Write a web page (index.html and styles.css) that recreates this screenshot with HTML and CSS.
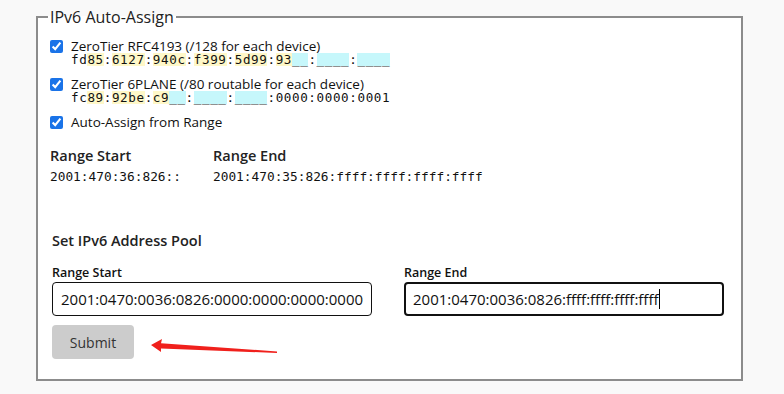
FILE: index.html
```html
<!DOCTYPE html>
<html>
<head>
<meta charset="utf-8">
<link rel="stylesheet" href="styles.css">
</head>
<body>
<fieldset class="box">
  <legend class="box-title">IPv6 Auto-Assign</legend>
  <div class="opt opt-first">
    <input type="checkbox" class="cb" checked>
    <div class="opt-body">
      <div class="opt-label">ZeroTier RFC4193 (/128 for each device)</div>
      <div class="addr">fd<span class="y">85</span>:<span class="y">6127</span>:<span class="y">940c</span>:<span class="y">f399</span>:<span class="y">5d99</span>:<span class="y">93</span><span class="c">__</span>:<span class="c">____</span>:<span class="c">____</span></div>
    </div>
  </div>
  <div class="opt">
    <input type="checkbox" class="cb" checked>
    <div class="opt-body">
      <div class="opt-label">ZeroTier 6PLANE (/80 routable for each device)</div>
      <div class="addr">fc<span class="y">89</span>:<span class="y">92be</span>:<span class="y">c9</span><span class="c">__</span>:<span class="c">____</span>:<span class="c">____</span>:0000:0000:0001</div>
    </div>
  </div>
  <div class="opt">
    <input type="checkbox" class="cb" checked>
    <div class="opt-body">
      <div class="opt-label">Auto-Assign from Range</div>
    </div>
  </div>
  <div class="ranges">
    <div class="range">
      <div class="range-head">Range Start</div>
      <div class="range-val">2001:470:36:826::</div>
    </div>
    <div class="range">
      <div class="range-head">Range End</div>
      <div class="range-val">2001:470:35:826:ffff:ffff:ffff:ffff</div>
    </div>
  </div>
  <div class="pool">
    <div class="pool-title">Set IPv6 Address Pool</div>
    <div class="pool-row">
      <label class="field">
        <span class="field-label">Range Start</span>
        <span class="input">2001:0470:0036:0826:0000:0000:0000:0000</span>
      </label>
      <label class="field">
        <span class="field-label">Range End</span>
        <span class="input focus">2001:0470:0036:0826:ffff:ffff:ffff:ffff<span class="caret"></span></span>
      </label>
    </div>
    <button class="submit" type="button">Submit</button>
  </div>
</fieldset>
<svg class="arrow" width="140" height="24" viewBox="0 0 140 24">
  <polygon points="1,7 12,1 11,5.2 127,13.5 127,15 11,10.5 11,14" fill="#f0201c"/>
</svg>
</body>
</html>
```
FILE: styles.css
```css
html, body {
  margin: 0;
  padding: 0;
}
body {
  background: #f9f9f9;
  font-family: "Open Sans", "Noto Sans", sans-serif;
  color: #222;
  position: relative;
  height: 394px;
  overflow: hidden;
}
.box {
  margin: 8px 0 0 36px;
  width: 707px;
  box-sizing: border-box;
  border: 2px solid #8c8c8c;
  background: #fff;
  padding: 0 12px 20px 12px;
  min-width: 0;
}
.box-title {
  font-size: 16px;
  padding: 0 2px;
  margin-left: -2px;
  line-height: 18px;
  color: #222;
}
.opt {
  display: flex;
  align-items: flex-start;
  margin-top: 10px;
}
.opt.opt-first {
  margin-top: 13px;
}
.cb {
  width: 13px;
  height: 13px;
  margin: 1px 8px 0 0;
  accent-color: #1a73e8;
}
.opt-body {
  display: flex;
  flex-direction: column;
}
.opt-label {
  font-size: 13.5px;
  line-height: 14px;
  color: #111;
}
.addr {
  font-family: "DejaVu Sans Mono", "Liberation Mono", monospace;
  font-size: 12.6px;
  letter-spacing: 0.6px;
  line-height: 14px;
  color: #111;
}
.y, .c {
  display: inline-block;
  line-height: 13px;
}
.y { background: #fff8c8; }
.c { background: #c6f7fb; }
.ranges {
  display: flex;
  margin-top: 17px;
}
.range {
  display: flex;
  flex-direction: column;
}
.range:first-child {
  width: 163px;
}
.range-head {
  font-size: 14.5px;
  font-weight: 600;
  line-height: 20px;
  color: #222;
}
.range-val {
  font-family: "DejaVu Sans Mono", "Liberation Mono", monospace;
  font-size: 12.8px;
  line-height: 16px;
  margin-top: 3px;
  color: #111;
}
.pool {
  margin-top: 46px;
  padding-left: 2px;
}
.pool-title {
  font-size: 14.5px;
  font-weight: 600;
  line-height: 20px;
  color: #222;
}
.pool-row {
  display: flex;
  gap: 32px;
  margin-top: 14px;
}
.field {
  display: flex;
  flex-direction: column;
  width: 320px;
}
.field-label {
  font-size: 12.5px;
  font-weight: 600;
  line-height: 16px;
  color: #111;
  margin-bottom: 1px;
}
.input {
  display: flex;
  align-items: center;
  height: 34px;
  box-sizing: border-box;
  border: 1px solid #111;
  border-radius: 4px;
  padding: 0 8px;
  font-size: 15px;
  color: #111;
  background: #fff;
}
.input.focus {
  border: 2px solid #111;
  padding: 0 7px;
}
.caret {
  display: inline-block;
  width: 1px;
  height: 20px;
  background: #000;
}
.submit {
  display: block;
  margin-top: 9px;
  width: 82px;
  height: 34px;
  border: none;
  border-radius: 4px;
  background: #cccccc;
  color: #333;
  font-family: "Open Sans", "Noto Sans", sans-serif;
  font-size: 14px;
  padding: 0;
}
.arrow {
  position: absolute;
  left: 150px;
  top: 338px;
}
```
